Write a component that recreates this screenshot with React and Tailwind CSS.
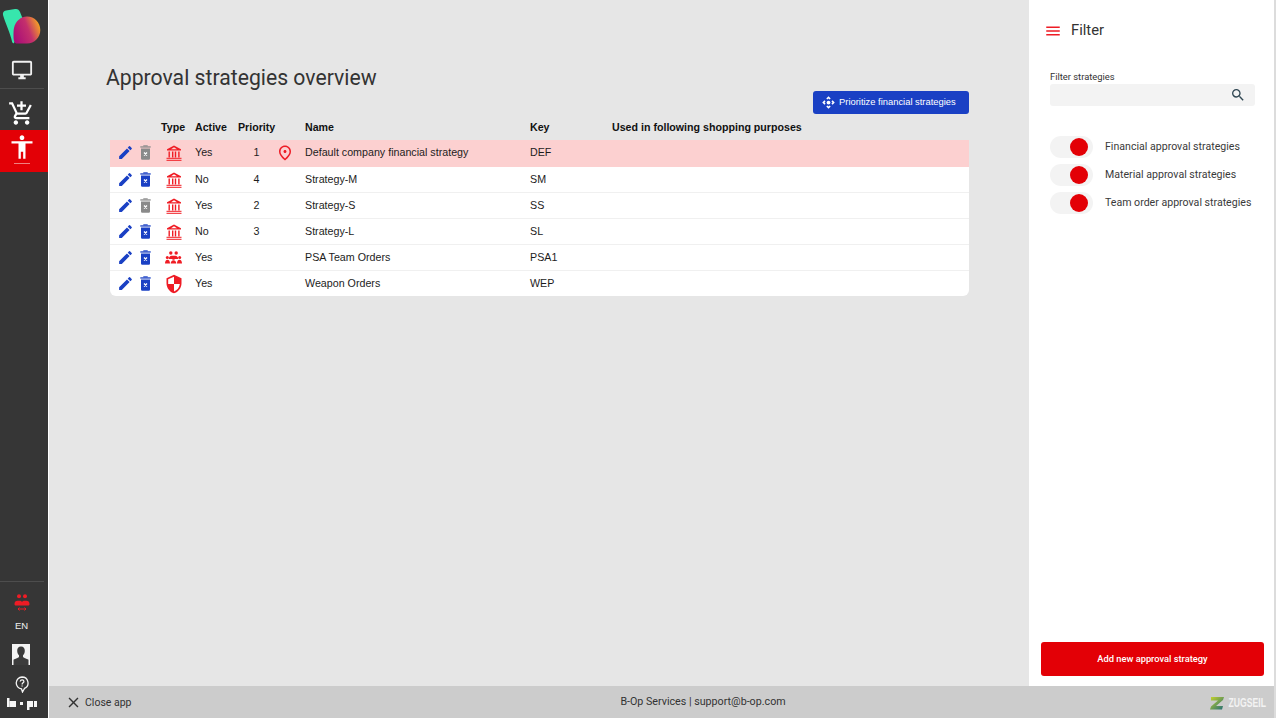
import React from "react";
import { MdEdit, MdSecurity, MdOutlinePlace, MdControlCamera, MdMenu, MdSearch, MdClose, MdOutlineDesktopWindows, MdOutlineAddShoppingCart, MdAccessibility } from "react-icons/md";

const rows = [
  { type: "bank", active: "Yes", prio: "1", name: "Default company financial strategy", key: "DEF", pin: true, grey: true, hl: true },
  { type: "bank", active: "No", prio: "4", name: "Strategy-M", key: "SM" },
  { type: "bank", active: "Yes", prio: "2", name: "Strategy-S", key: "SS", grey: true },
  { type: "bank", active: "No", prio: "3", name: "Strategy-L", key: "SL" },
  { type: "team", active: "Yes", prio: "", name: "PSA Team Orders", key: "PSA1" },
  { type: "shield", active: "Yes", prio: "", name: "Weapon Orders", key: "WEP", last: true },
];

const cols = "grid grid-cols-[51px_34px_43px_67px_225px_82px_1fr] items-center";

function Bank() {
  return (
    <svg width="16" height="16" viewBox="0 0 16 16" fill="#f01c24">
      <path fillRule="evenodd" d="M8 0.500 15 4.200V5.500H1V4.200ZM8 2.300 5 4.300H11Z" />
      <rect x="2.500" y="6.500" width="1.400" height="6" />
      <rect x="6" y="6.500" width="1.400" height="6" />
      <rect x="8.800" y="6.500" width="1.400" height="6" />
      <rect x="12.200" y="6.500" width="1.400" height="6" />
      <rect x="0.500" y="12.800" width="15" height="1" />
      <rect x="0.500" y="14.800" width="15" height="1" />
    </svg>
  );
}

function Team() {
  return (
    <svg width="17" height="13" viewBox="0 0 17 13" fill="#f01c24">
      <circle cx="5.800" cy="2" r="1.700" />
      <circle cx="11.200" cy="2" r="1.700" />
      <path d="M3.800 8c0-2 1.200-3.300 2.800-3.300h3.800C12 4.700 13.200 6 13.200 8Z" />
      <circle cx="2.300" cy="6.500" r="1.500" />
      <circle cx="14.700" cy="6.500" r="1.500" />
      <circle cx="8.500" cy="7.200" r="1.600" />
      <path d="M0 12.500c0-2.300 1-3.700 2.500-3.700S5 10.200 5 12.500ZM12 12.500c0-2.300 1-3.700 2.500-3.700s2.500 1.400 2.500 3.700ZM5.700 12.500c0-2 1.200-3.300 2.800-3.300s2.800 1.300 2.800 3.300Z" />
    </svg>
  );
}

function Trash({ grey }) {
  const c = grey ? "#8a8a8a" : "#1a40c4";
  return (
    <svg width="11" height="15" viewBox="0 0 11 15">
      <rect x="3.300" y="0.300" width="4.400" height="1.100" fill={c} />
      <rect x="0.300" y="1.300" width="10.400" height="1.300" fill={c} />
      <path d="M1 3.500h9v10a1.200 1.200 0 0 1-1.200 1.200H2.200A1.200 1.200 0 0 1 1 13.500Z" fill={c} />
      <path d="M4 7.500l3 3M7 7.500l-3 3" stroke="#fff" strokeWidth="1.300" />
    </svg>
  );
}

function TypeIcon({ type }) {
  if (type === "team") return <Team />;
  if (type === "shield") return <MdSecurity className="text-[20px] text-[#ee1c25]" />;
  return <Bank />;
}

function Row({ r }) {
  const shape = r.hl
    ? "h-[27px] pb-[2px] bg-[#fcd0d0]"
    : r.last
    ? "h-[25px] rounded-b-md"
    : "h-[26px] border-b border-[#f0f0f0]";
  return (
    <div className={`${cols} ${shape} text-[10.700px] text-[#1c1c1c]`}>
      <div className="flex items-center pl-[7px]">
        <MdEdit className="text-[17px] text-[#1a40c4]" />
        <span className="ml-[6px] flex">
          <Trash grey={r.grey} />
        </span>
      </div>
      <div className="flex justify-center pr-[9px]">
        <TypeIcon type={r.type} />
      </div>
      <div>{r.active}</div>
      <div className="flex items-center">
        <div className="w-[37px] text-center">{r.prio}</div>
        {r.pin && <MdOutlinePlace className="ml-[1px] text-[18px] text-[#ee1c25]" />}
      </div>
      <div>{r.name}</div>
      <div>{r.key}</div>
      <div />
    </div>
  );
}

function Toggle({ label }) {
  return (
    <div className="flex items-center h-[28px]">
      <div className="relative h-[22px] w-[43px] rounded-full bg-[#f3f3f3]">
        <div className="absolute right-[5px] top-[2px] h-[18px] w-[18px] rounded-full bg-[#e30006]" />
      </div>
      <span className="ml-[12px] text-[10.600px] text-[#3a3a3a]">{label}</span>
    </div>
  );
}

export default function App() {
  return (
    <div className="flex h-[721px] w-[1276px] items-start overflow-hidden bg-white font-['Roboto',sans-serif]">
      <aside className="flex h-[718px] w-[48px] shrink-0 flex-col items-stretch bg-[#363636] text-white">
        <div className="flex h-[48px]">
          <svg width="48" height="48" viewBox="0 0 48 48">
            <defs>
              <linearGradient id="lg" x1="0" y1="0.7" x2="1" y2="0.3">
                <stop offset="0" stopColor="#a80d78" />
                <stop offset="0.55" stopColor="#c4306c" />
                <stop offset="1" stopColor="#f8a821" />
              </linearGradient>
            </defs>
            <path d="M3 15c-.5-2.500.7-4 3-4.500l9-1.500c2.500-.4 4 .5 5 3l4 10-10 21c-1 .5-1.500 0-2-1.500C11 35 4.500 21 3 15Z" fill="#37e6ad" />
            <path d="M13.500 36c0-3 0-6 .5-8 1.500-7 7-11.500 13-11.500 7.500 0 13.300 6 13.300 13.500S34.500 43.500 27 43.500c-3.500 0-7 0-10 0-2.500 0-3.500-2-3.500-7.500Z" fill="url(#lg)" />
          </svg>
        </div>
        <div className="flex h-[40px] items-start justify-center pr-[5px] pt-[11px]">
          <MdOutlineDesktopWindows className="text-[22px] text-[#f2f2f2]" />
        </div>
        <div className="h-px w-[44px] bg-[#4d4d4d]" />
        <div className="flex h-[41px] items-center justify-center pr-[5px] pt-[7px]">
          <MdOutlineAddShoppingCart className="text-[27px] text-white" />
        </div>
        <div className="flex h-[42px] flex-col items-center bg-[#e30006] pr-[5px] pt-[3px]">
          <MdAccessibility className="text-[28px] text-white" />
          <div className="mt-[2px] h-px w-[16px] bg-[#f08080]" />
        </div>
        <div className="flex-1" />
        <div className="h-px w-[44px] bg-[#4d4d4d]" />
        <div className="flex h-[38px] items-center justify-center pr-[5px] pt-[2px]">
          <svg width="16" height="17" viewBox="0 0 16 17" fill="#ee1c25">
            <circle cx="5" cy="2.300" r="2" />
            <circle cx="11" cy="2.300" r="2" />
            <path d="M0.500 10c0-2 1.300-3.200 3-3.200h2c1 0 2 .5 2.500 1 .5-.5 1.500-1 2.500-1h2c1.700 0 3 1.200 3 3.200 0 1-.7 1.500-1.500 1.500H2C1.200 11.500.5 11 .5 10Z" />
            <path d="M4 15h8M5.500 13.500 4 15l1.500 1.500M10.500 13.500 12 15l-1.500 1.500" stroke="#ee1c25" strokeWidth="1" fill="none" />
          </svg>
        </div>
        <div className="flex h-[12px] items-center justify-center pr-[5px] font-['Liberation_Sans',sans-serif] text-[9.500px] text-[#f0f0f0]">EN</div>
        <div className="flex h-[44px] items-center justify-center pr-[6px]">
          <svg width="18" height="21" viewBox="0 0 18 21">
            <rect width="18" height="21" fill="#f4f4f4" />
            <path d="M9 2.500c2.600 0 3.800 2 3.800 4.200 0 2-.8 3.600-1.800 4.600v1.500c0 1 3.500 1.800 5.500 3V21H1.500v-5.200c2-1.200 5.500-2 5.500-3v-1.500C6 10.300 5.200 8.700 5.200 6.700 5.200 4.500 6.400 2.500 9 2.500Z" fill="#3c3c3c" />
          </svg>
        </div>
        <div className="flex h-[16px] items-center justify-center pr-[5px]">
          <svg width="14" height="17" viewBox="0 0 14 17" fill="none" stroke="#f4f4f4" strokeWidth="1.300">
            <path d="M7 1a6 6 0 0 1 2.500 11.450L7.500 16l-1-3.050A6 6 0 0 1 7 1Z" />
            <path d="M5.200 5.500c.2-1.100 1-1.700 1.900-1.700 1 0 1.800.7 1.800 1.600 0 1.300-1.800 1.500-1.800 3M7.100 9.400v1" />
          </svg>
        </div>
        <div className="flex h-[26px] items-start justify-center pr-[5px] pt-[6px]">
          <svg width="30" height="12" viewBox="0 0 30 12" fill="#f6f6f6">
            <rect x="0" y="0" width="2.500" height="9" />
            <rect x="2.500" y="3" width="6.500" height="6" />
            <rect x="13" y="4" width="3" height="3" />
            <rect x="20" y="3" width="6" height="6" />
            <rect x="20" y="8" width="2.500" height="4" />
            <rect x="27" y="3" width="3" height="6" />
          </svg>
        </div>
      </aside>

      <div className="ml-[1px] flex h-[718px] flex-1 flex-col bg-[#e6e6e6]">
        <div className="flex min-h-0 flex-1">
          <main className="relative w-[980px] shrink-0 pl-[57px] pt-[66px]">
            <h1 className="text-[21.200px] font-normal leading-[24px] text-[#333333]">Approval strategies overview</h1>
            <div className="mt-[1px] flex w-[863px] justify-end">
              <button className="flex h-[23px] w-[156px] items-center gap-[3px] rounded-[3px] bg-[#1a40c4] pl-[8px] font-['Liberation_Sans',sans-serif] text-[9.400px] text-white">
                <MdControlCamera className="text-[15px]" />
                <span>Prioritize financial strategies</span>
              </button>
            </div>
            <div className="ml-[4px] mt-[1px] w-[859px] font-['Liberation_Sans',sans-serif]">
              <div className={`${cols} h-[25px] text-[10.650px] font-bold text-[#111111]`}>
                <div />
                <div>Type</div>
                <div>Active</div>
                <div>Priority</div>
                <div>Name</div>
                <div>Key</div>
                <div>Used in following shopping purposes</div>
              </div>
              <div className="rounded-b-md bg-white">
                {rows.map((r) => (
                  <Row key={r.key} r={r} />
                ))}
              </div>
            </div>
          </main>
          <section className="flex w-[245px] shrink-0 flex-col bg-white pl-[12px] pr-[10px]">
            <div className="flex h-[60px] items-center pl-[3px] pt-[1px]">
              <MdMenu className="text-[18px] text-[#ee1c25]" />
              <span className="ml-[9px] text-[14.800px] text-[#333333]">Filter</span>
            </div>
            <label className="ml-[9px] mt-[10px] text-[9.400px] leading-[14px] text-[#333333]">Filter strategies</label>
            <div className="ml-[9px] mr-[9px] flex h-[22px] items-center justify-end rounded-[3px] bg-[#f3f3f3] pr-[9px]">
              <MdSearch className="text-[16px] text-[#2f4652]" />
            </div>
            <div className="ml-[9px] mt-[27px] flex flex-col">
              <Toggle label="Financial approval strategies" />
              <Toggle label="Material approval strategies" />
              <Toggle label="Team order approval strategies" />
            </div>
            <div className="flex-1" />
            <button className="mb-[10px] h-[34px] w-[223px] rounded-[3px] bg-[#e30006] text-[9.300px] font-medium text-white">Add new approval strategy</button>
          </section>
        </div>
        <footer className="grid h-[32px] shrink-0 grid-cols-[1fr_auto_1fr] items-center bg-[#cccccc] pl-[16px] pr-[8px] pt-[1px] text-[10.500px] text-[#333333]">
          <div className="flex items-center gap-[3px]">
            <MdClose className="text-[17px]" />
            <span>Close app</span>
          </div>
          <div className="pl-[75px] text-[10.700px]">B-Op Services | support@b-op.com</div>
          <div className="flex items-center justify-end">
            <svg width="15" height="14" viewBox="0 0 15 14" className="relative z-10">
              <defs>
                <linearGradient id="zg" x1="0" y1="0" x2="1" y2="1">
                  <stop offset="0" stopColor="#c8d42a" />
                  <stop offset="1" stopColor="#1f6c78" />
                </linearGradient>
              </defs>
              <path d="M1 1h13l-1 3-7 6h7l-1 3.500H0l1-3 7-6H1Z" fill="url(#zg)" />
            </svg>
            <span className="ml-[-11px] inline-block w-max origin-right scale-x-[0.72] font-['Liberation_Sans',sans-serif] text-[12px] font-bold whitespace-nowrap text-[#f3f3f3]">ZUGSEIL</span>
          </div>
        </footer>
      </div>
      <div className="h-[718px] w-[2px] shrink-0 bg-[#dcdcdc]" />
    </div>
  );
}
